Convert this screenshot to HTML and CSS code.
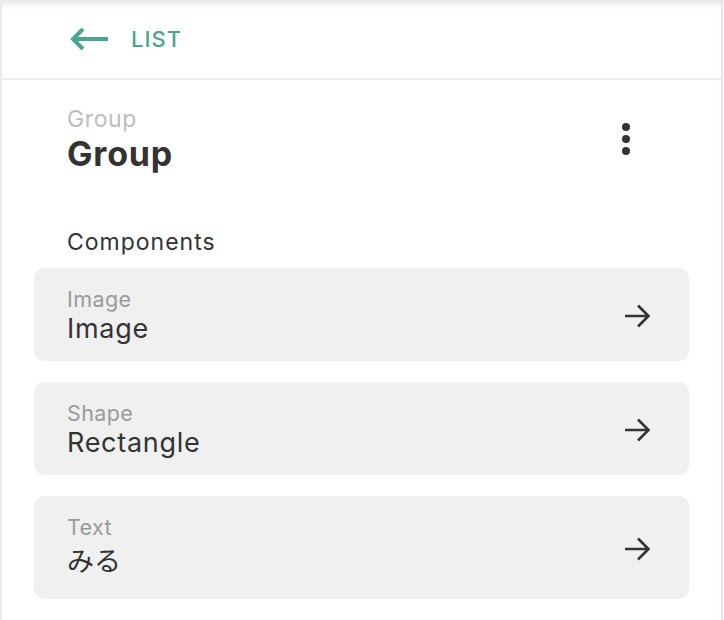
FILE: index.html
```html
<!DOCTYPE html>
<html lang="en">
<head>
<meta charset="utf-8">
<link rel="stylesheet" href="styles.css">
</head>
<body>
<div class="panel">
  <header class="topbar">
    <a class="back" href="#">
      <svg class="back-icon" width="40" height="24" viewBox="0 0 40 24"><path d="M3 12H38M13 2L3 12L13 22" fill="none" stroke="#4ba593" stroke-width="4" stroke-linecap="butt" stroke-linejoin="miter"/></svg>
      <span class="back-text">LIST</span>
    </a>
  </header>
  <section class="content">
    <div class="title-row">
      <div class="title-block">
        <div class="kind">Group</div>
        <h1 class="title">Group</h1>
      </div>
      <button class="more" aria-label="More">
        <span class="dot"></span><span class="dot"></span><span class="dot"></span>
      </button>
    </div>
    <h2 class="section-label">Components</h2>
    <ul class="cards">
      <li class="card">
        <div class="card-text">
          <div class="card-kind">Image</div>
          <div class="card-name">Image</div>
        </div>
        <svg class="go" width="26" height="24" viewBox="0 0 26 24"><path d="M0 12H24M13 1.5L23.5 12L13 22.5" fill="none" stroke="#333" stroke-width="2.6"/></svg>
      </li>
      <li class="card">
        <div class="card-text">
          <div class="card-kind">Shape</div>
          <div class="card-name">Rectangle</div>
        </div>
        <svg class="go" width="26" height="24" viewBox="0 0 26 24"><path d="M0 12H24M13 1.5L23.5 12L13 22.5" fill="none" stroke="#333" stroke-width="2.6"/></svg>
      </li>
      <li class="card">
        <div class="card-text">
          <div class="card-kind">Text</div>
          <div class="card-name jp">みる</div>
        </div>
        <svg class="go" width="26" height="24" viewBox="0 0 26 24"><path d="M0 12H24M13 1.5L23.5 12L13 22.5" fill="none" stroke="#333" stroke-width="2.6"/></svg>
      </li>
    </ul>
  </section>
</div>
</body>
</html>
```
FILE: styles.css
```css
* { box-sizing: border-box; }
html, body { margin: 0; padding: 0; background: #fff; }
body {
  font-family: "Inter", "Open Sans", sans-serif;
  color: #333;
}
.panel {
  width: 723px;
  height: 620px;
  border-left: 2px solid #ebebeb;
  border-right: 2px solid #e6e6e6;
  box-shadow: inset 0 8px 10px -6px rgba(0,0,0,0.14);
}
.topbar {
  height: 80px;
  border-bottom: 2px solid #ebebeb;
  display: flex;
  align-items: center;
  padding-left: 68px;
}
.back {
  display: flex;
  align-items: center;
  gap: 21px;
  text-decoration: none;
  color: #4ba593;
}
.back-icon { display: block; }
.back-text {
  font-size: 22px;
  font-weight: 500;
  letter-spacing: 1px;
}
.content { padding: 25px 32px 0 32px; }
.title-row {
  display: flex;
  justify-content: space-between;
  align-items: flex-start;
  padding-left: 33px;
}
.kind {
  font-size: 23px;
  line-height: 28px;
  letter-spacing: 0.6px;
  color: #bdbdbd;
}
.title {
  margin: 0;
  font-size: 34px;
  line-height: 41.2px;
  font-weight: 700;
  letter-spacing: 0.8px;
  color: #333;
}
.more {
  border: 0;
  background: none;
  padding: 0;
  margin: 18px 59px 0 0;
  display: flex;
  flex-direction: column;
  gap: 4px;
}
.dot {
  width: 8px;
  height: 8px;
  border-radius: 50%;
  background: #333;
  display: block;
}
.section-label {
  margin: 54px 0 0 33px;
  font-size: 23px;
  line-height: 28px;
  font-weight: 400;
  letter-spacing: 1px;
  color: #333;
}
.cards {
  list-style: none;
  margin: 12px 0 0;
  padding: 0;
  display: flex;
  flex-direction: column;
  gap: 21px;
}
.card {
  background: #f0f0f0;
  border-radius: 10px;
  display: flex;
  align-items: center;
  justify-content: space-between;
  padding: 18px 38px 16px 33px;
}
.card-kind {
  font-size: 21.5px;
  line-height: 26px;
  letter-spacing: 0.4px;
  color: #9a9a9a;
}
.card-name {
  font-size: 27px;
  line-height: 33px;
  letter-spacing: 0.7px;
  color: #333;
}
.card-name.jp {
  font-family: "Inter", "Noto Sans CJK JP", sans-serif;
  line-height: 43px;
  letter-spacing: 0;
}
.go { display: block; }
```
